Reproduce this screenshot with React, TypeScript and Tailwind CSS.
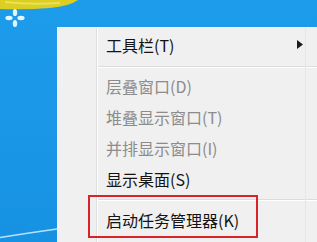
import React from "react";

const font = { fontFamily: '"Noto Sans CJK SC", "Noto Sans", sans-serif' };

function Row({ label, disabled, arrow }: { label: string; disabled?: boolean; arrow?: boolean }) {
  return (
    <div className="relative flex h-[31px] items-center pl-[48px]">
      <span className={`text-[16px] leading-none ${disabled ? "text-[#8c8c8c]" : "text-[#141414]"}`}>{label}</span>
      {arrow && (
        <svg className="absolute left-[239px] top-[11px]" width="6" height="9" viewBox="0 0 6 9">
          <path d="M0 0 L6 4.5 L0 9 Z" fill="#1a1a1a" />
        </svg>
      )}
    </div>
  );
}

function Sep({ pt }: { pt: string }) {
  return (
    <div className={`h-[10px] pl-[40px] ${pt}`}>
      <div className="border-t border-[#dcdcdc]" />
      <div className="border-t border-white" />
    </div>
  );
}

export default function App() {
  return (
    <div className="relative h-[242px] w-[317px] overflow-hidden bg-gradient-to-b from-[#1d9ceb] to-[#1792e3]" style={font}>
      {/* wallpaper decorations */}
      <svg className="absolute left-0 top-0" width="90" height="40" viewBox="0 0 90 40">
        <path d="M0 0 L78 0 Q70 6 50 8 Q25 10 0 9 Z" fill="#dccf22" />
        <path d="M5 2 Q30 5 60 3" stroke="#f1e873" strokeWidth="2" fill="none" opacity="0.7" />
        <ellipse cx="15" cy="12.5" rx="2.2" ry="3.6" fill="#e3f5ff" />
        <ellipse cx="15" cy="23.5" rx="2.2" ry="3.6" fill="#e3f5ff" />
        <ellipse cx="9" cy="18" rx="3.6" ry="2.2" fill="#e3f5ff" />
        <ellipse cx="21" cy="18" rx="3.6" ry="2.2" fill="#e3f5ff" />
      </svg>
      <svg className="absolute left-0 top-[222px]" width="60" height="20" viewBox="0 0 60 20">
        <path d="M0 15.5 Q28 11 57 7" stroke="#b6e2ff" strokeWidth="1.6" fill="none" />
      </svg>

      <div className="pl-[57px] pt-[27px]">
        <div className="relative h-[220px] w-[270px] border-l border-t border-[#f9f9f9] bg-[#f0f0f0] pt-[1px]">
          {/* gutter line */}
          <div className="absolute left-[38px] top-0 h-full w-[2px] border-l border-[#dedede] bg-white" />
          <div className="absolute left-[247px] top-0 h-full border-l border-[#e6e6e6]" />
          <Row label="工具栏(T)" arrow />
          <Sep pt="pt-[6px]" />
          <Row label="层叠窗口(D)" disabled />
          <Row label="堆叠显示窗口(T)" disabled />
          <Row label="并排显示窗口(I)" disabled />
          <Row label="显示桌面(S)" />
          <Sep pt="pt-[5px]" />
          <Row label="启动任务管理器(K)" />
        </div>
      </div>

      {/* red annotation box */}
      <div className="absolute left-[88px] top-[195px] h-[43px] w-[170px] border-2 border-[#d8232a]" />
    </div>
  );
}
